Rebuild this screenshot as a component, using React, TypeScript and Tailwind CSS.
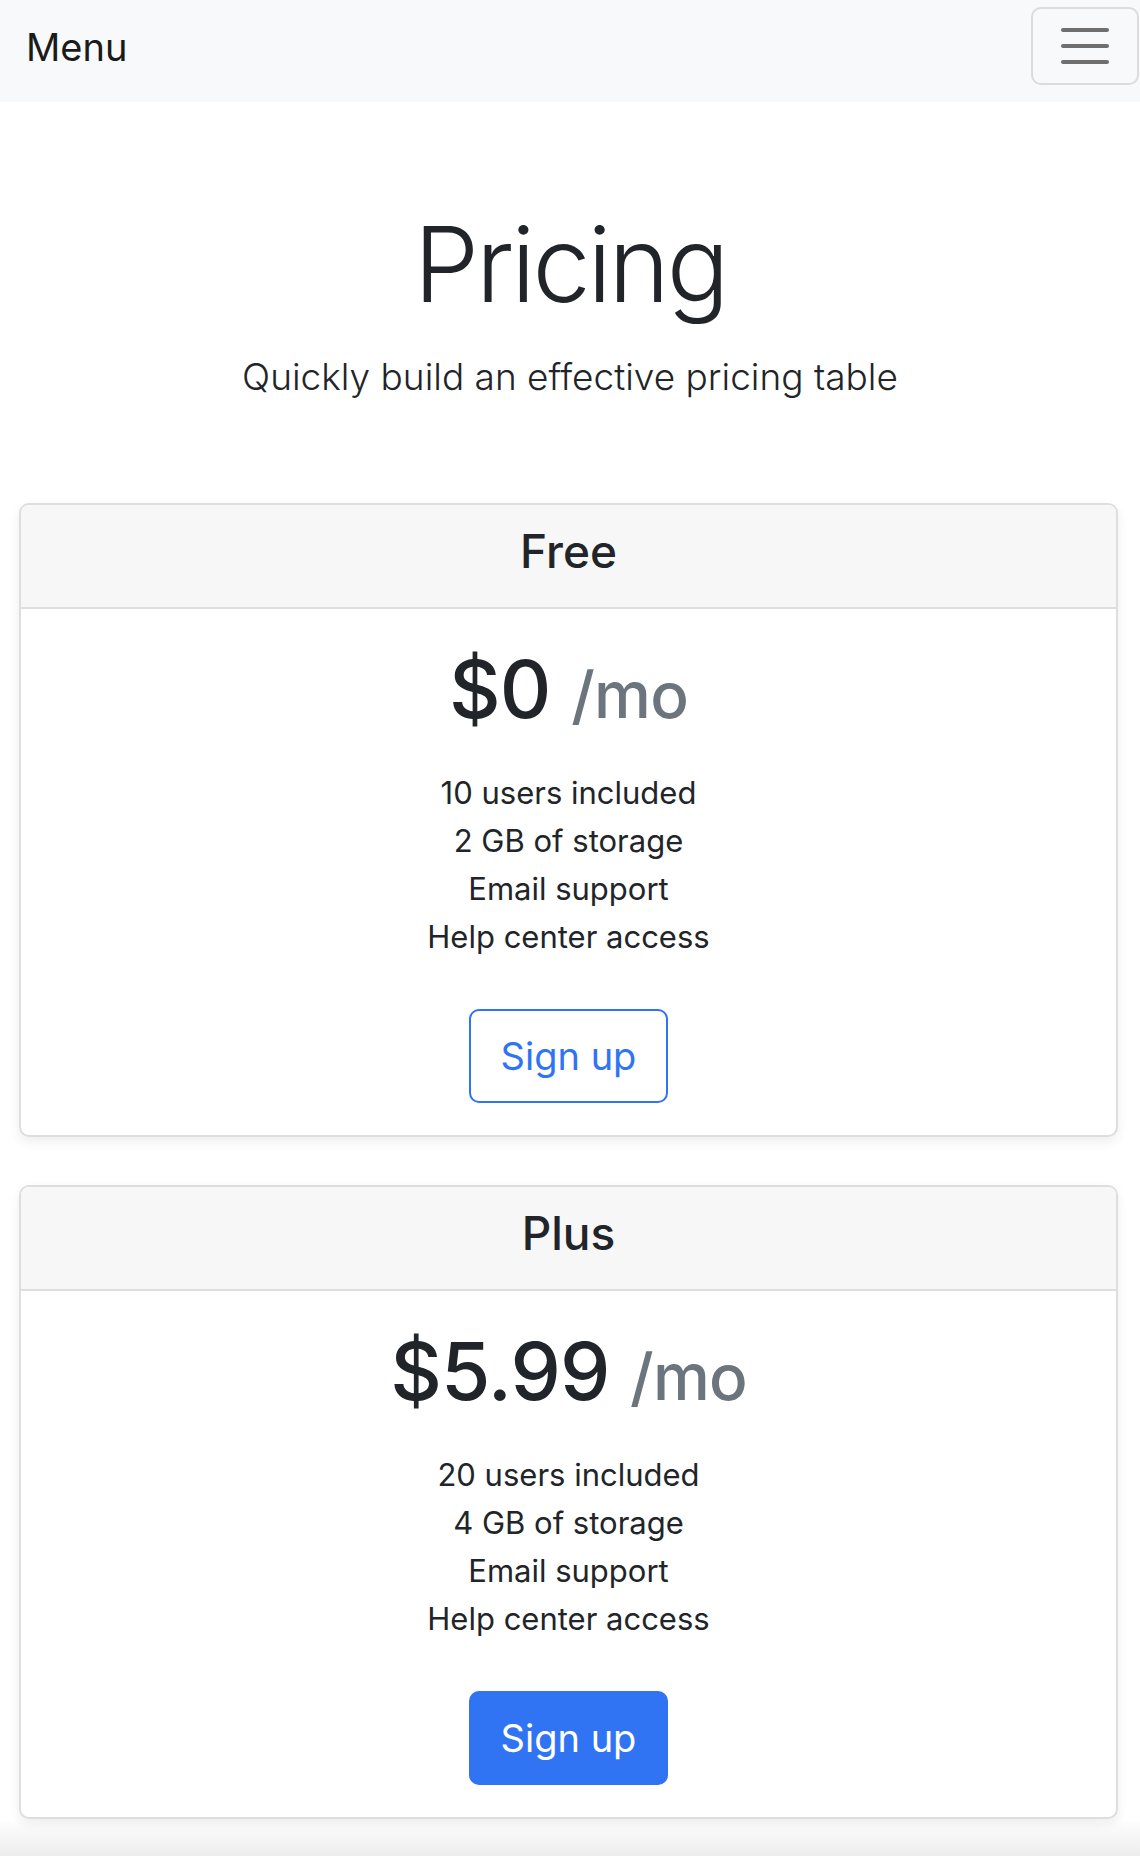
import React from "react";

type Plan = {
    name: string;
    price: string;
    features: string[];
    filled?: boolean;
};

const plans: Plan[] = [
    {
        name: "Free",
        price: "$0",
        features: ["10 users included", "2 GB of storage", "Email support", "Help center access"],
    },
    {
        name: "Plus",
        price: "$5.99",
        features: ["20 users included", "4 GB of storage", "Email support", "Help center access"],
        filled: true,
    },
];

function PlanCard({ plan }: { plan: Plan }) {
    return (
        <div className="rounded-[10px] border-2 border-[#dedede] bg-white shadow-[0_5px_12px_rgba(0,0,0,0.07)] overflow-hidden">
            {/**Header */}
            <div className="h-[104px] flex items-center justify-center pb-[10px] bg-[#f7f7f7] border-b-2 border-[#dedede]">
                <h4 className="text-[46px] leading-[1.2] font-medium">{plan.name}</h4>
            </div>

            {/**Body */}
            <div className="px-[32px] pt-[32px] pb-[32px] text-center">
                <h1 className="text-[80px] leading-[1.2] font-medium tracking-[-0.01em]">
                    {plan.price} <small className="text-[64px] text-[#6c757d]">/mo</small>
                </h1>

                <ul className="mt-[32px] text-[31px] leading-[48px]">
                    {plan.features.map((f) => (
                        <li key={f}>{f}</li>
                    ))}
                </ul>

                <button
                    className={
                        plan.filled
                            ? "mt-[48px] w-[199px] h-[94px] rounded-[10px] border-2 border-[#3074f4] bg-[#3074f4] text-white text-[38px] leading-[1.5]"
                            : "mt-[48px] w-[199px] h-[94px] rounded-[10px] border-2 border-[#3074f4] bg-white text-[#3074f4] text-[38px] leading-[1.5]"
                    }
                >
                    Sign up
                </button>
            </div>
        </div>
    );
}

export default function App() {
    return (
        <div className="min-h-[1856px] bg-white text-[#212529] font-['Inter','Noto_Sans',sans-serif]">
            {/**Navbar */}
            <nav className="h-[102px] bg-[#f8f9fa] flex items-start justify-between pt-[7px] pl-[26px] pr-[1px]">
                <span className="text-[38px] leading-[80px] text-[#1a1a1a]">Menu</span>
                <button className="w-[108px] h-[78px] rounded-[10px] border-2 border-[#dcdcdc] flex flex-col items-center justify-center gap-[12.5px]">
                    <span className="block w-[48px] h-[3.5px] rounded-full bg-[#6f6f6f]" />
                    <span className="block w-[48px] h-[3.5px] rounded-full bg-[#6f6f6f]" />
                    <span className="block w-[48px] h-[3.5px] rounded-full bg-[#6f6f6f]" />
                </button>
            </nav>

            {/**Hero */}
            <section className="text-center pt-[100px]">
                <h1 className="text-[104px] leading-[1.2] font-light tracking-[-0.03em]">Pricing</h1>
                <p className="mt-[22px] text-[37px] leading-[1.5] font-light">
                    Quickly build an effective pricing table
                </p>
            </section>

            {/**Cards */}
            <div className="pl-[19px] pr-[22px] mt-[99px] flex flex-col gap-[48px]">
                {plans.map((p) => (
                    <PlanCard key={p.name} plan={p} />
                ))}
            </div>

            <div className="h-[40px] bg-gradient-to-b from-white to-[#ebebeb]" />
        </div>
    );
}
